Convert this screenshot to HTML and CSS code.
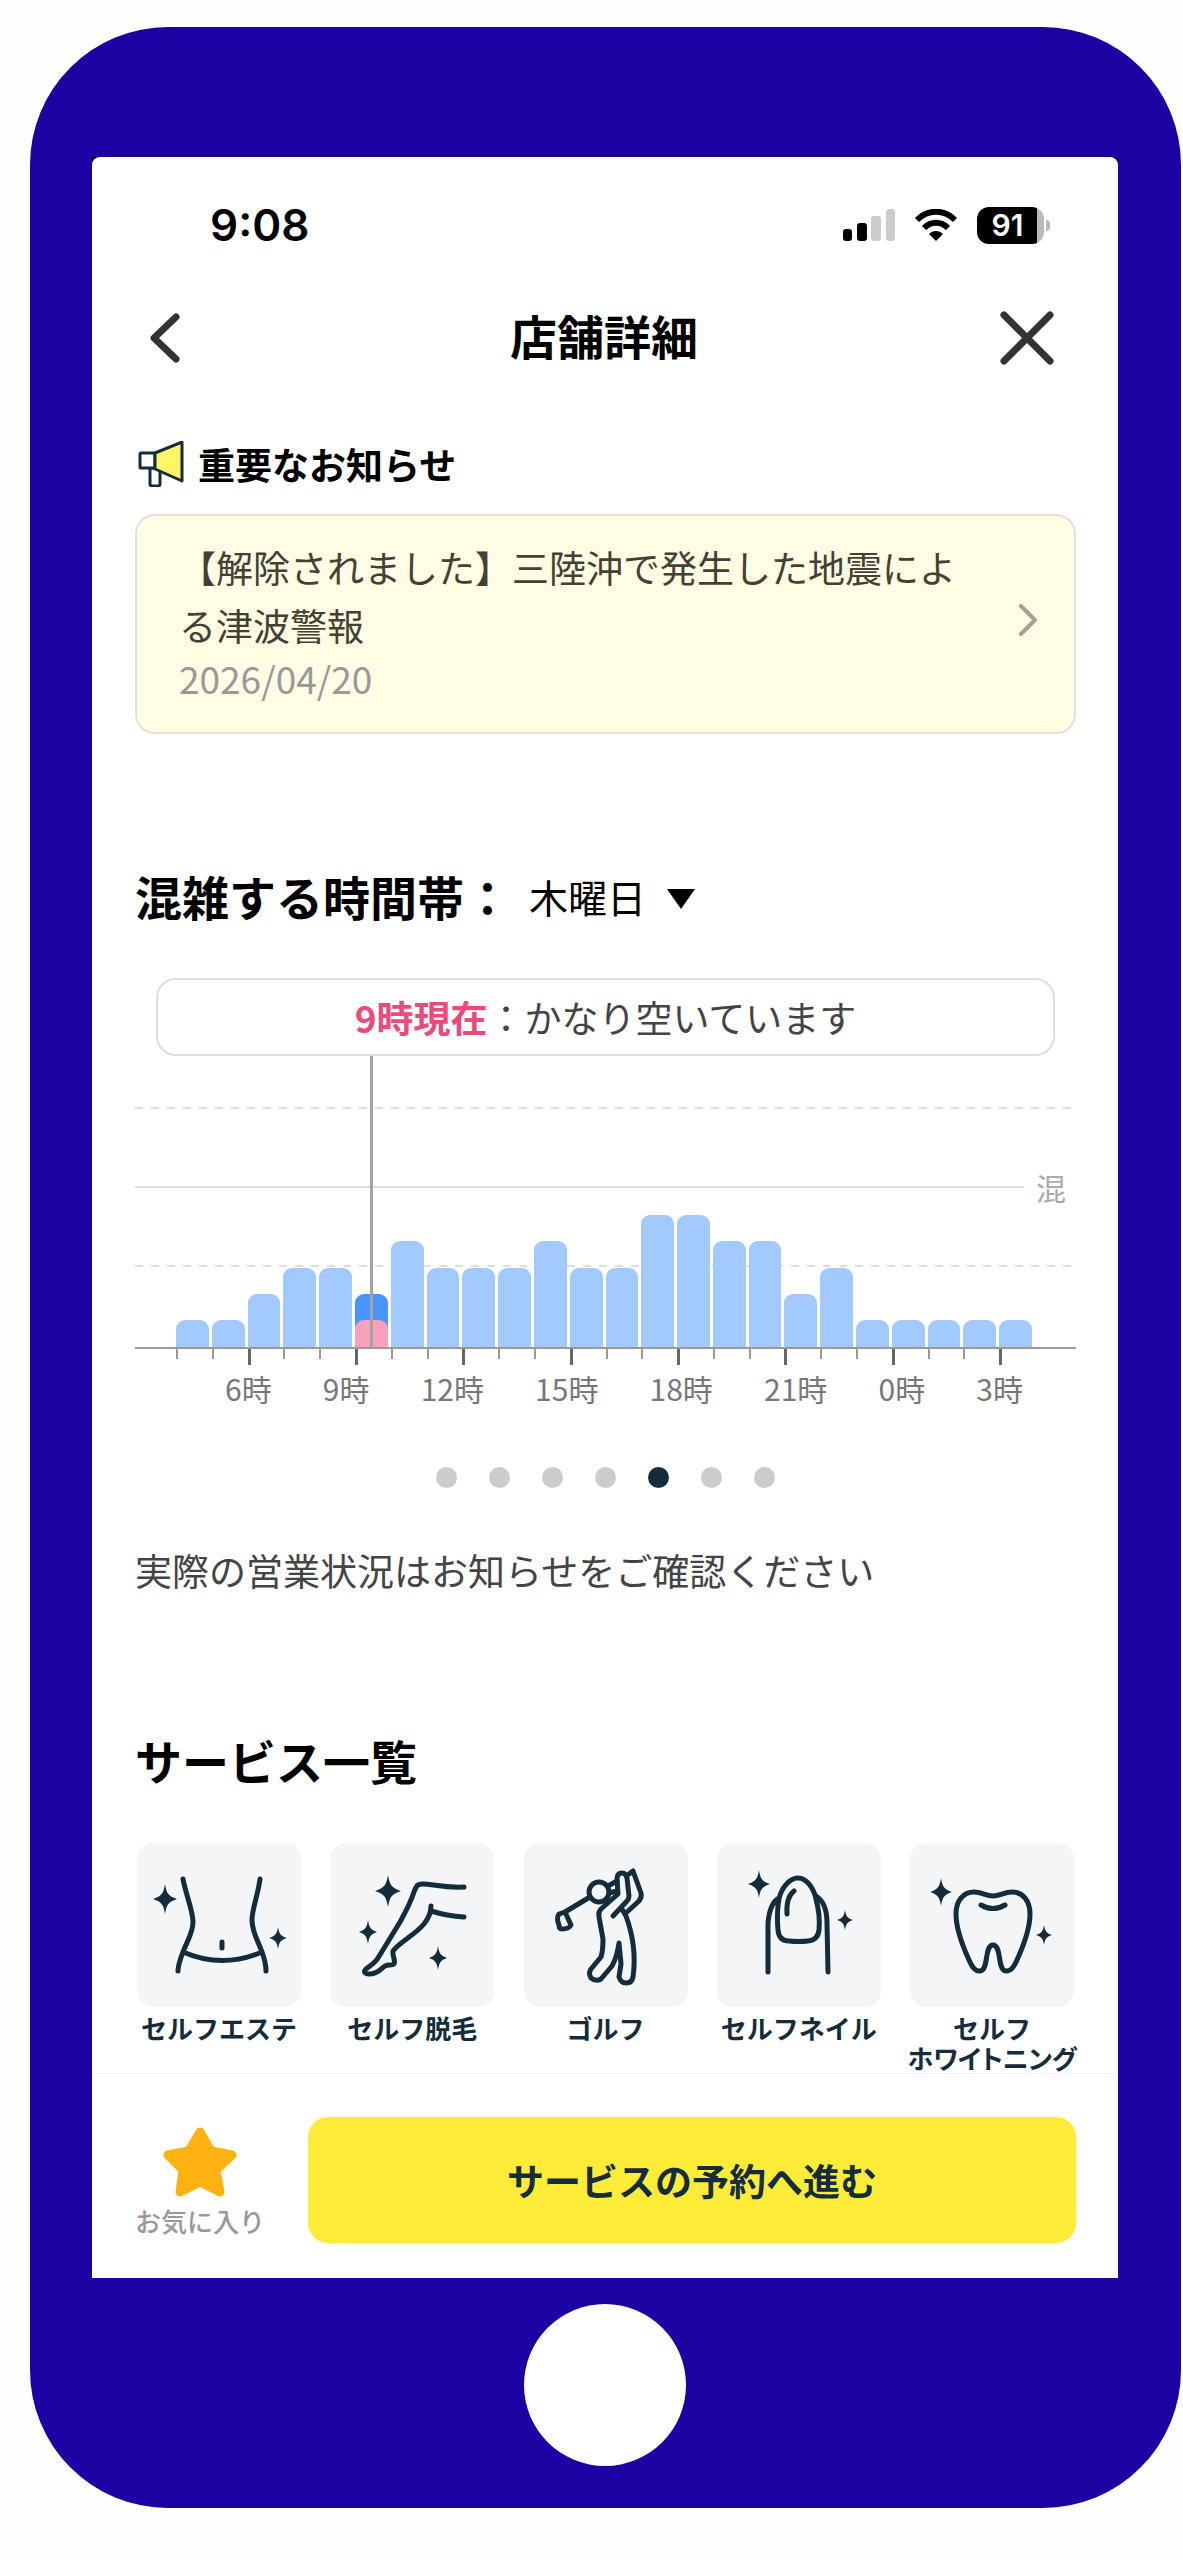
FILE: index.html
```html
<!DOCTYPE html>
<html lang="ja">
<head>
    <meta charset="UTF-8">
    <meta name="viewport" content="width=device-width, initial-scale=1.0">
    <title>店舗詳細</title>
    <link rel="stylesheet" href="styles.css">
</head>
<body>
    <!-- Shared sparkle shape -->
    <svg class="defs" width="0" height="0" aria-hidden="true">
        <symbol id="spark" viewBox="-12 -15 24 30" preserveAspectRatio="none">
            <path d="M0-15C1.500-6 3-3 12 0 3 3 1.500 6 0 15-1.500 6-3 3-12 0-3-3-1.500-6 0-15Z"/>
        </symbol>
    </svg>

    <div class="phone">
        <div class="bezel">
            <div class="screen">
                <!-- Status Bar -->
                <div class="status-bar">
                    <span class="clock">9:08</span>
                    <div class="status-icons">
                        <svg width="52" height="32" viewBox="0 0 52 32" aria-hidden="true">
                            <rect x="0" y="20" width="9" height="12" rx="3"/>
                            <rect x="14" y="14" width="10" height="18" rx="3"/>
                            <rect class="off" x="28" y="7" width="10" height="25" rx="3"/>
                            <rect class="off" x="43" y="0" width="9" height="32" rx="3"/>
                        </svg>
                        <svg class="wifi" width="44" height="32" viewBox="0 0 44 32" aria-hidden="true">
                            <path d="M3 11C14 0 30 0 41 11M10 19C17 12 27 12 34 19"/>
                            <path class="dot" d="M15 25C19 21 25 21 29 25L22 32Z"/>
                        </svg>
                        <div class="battery"><span>91</span></div>
                    </div>
                </div>

                <!-- Title Bar -->
                <header class="nav">
                    <button class="icon-btn" aria-label="戻る">
                        <svg width="30" height="50" viewBox="0 0 30 50"><path d="M26 4L4 25L26 46"/></svg>
                    </button>
                    <h1>店舗詳細</h1>
                    <button class="icon-btn" aria-label="閉じる">
                        <svg width="54" height="54" viewBox="0 0 54 54"><path d="M4 4L50 50M50 4L4 50"/></svg>
                    </button>
                </header>

                <main>
                    <!-- Notice -->
                    <section class="notice">
                        <h2>
                            <svg width="46" height="46" viewBox="0 0 46 46" aria-hidden="true">
                                <path class="handle" d="M12 27H22V43Q22 45 20 45H14Q12 45 12 43Z"/>
                                <path class="box" d="M17 12H3Q2 12 2 13V26Q2 27 3 27H17Z"/>
                                <path class="horn" d="M17 12L44 1V40L17 28Z"/>
                            </svg>
                            重要なお知らせ
                        </h2>
                        <a class="notice-card" href="#">
                            <div>
                                <p>【解除されました】三陸沖で発生した地震による津波警報</p>
                                <time datetime="2026-04-20">2026/04/20</time>
                            </div>
                            <svg width="20" height="32" viewBox="0 0 20 32" aria-hidden="true"><path d="M3 2L17 16L3 30"/></svg>
                        </a>
                    </section>

                    <!-- Busy Hours -->
                    <section class="busy">
                        <div class="busy-head">
                            <h2><label for="day">混雑する時間帯：</label></h2>
                            <div class="day-select">
                                <select id="day">
                                    <option>月曜日</option>
                                    <option>火曜日</option>
                                    <option>水曜日</option>
                                    <option selected>木曜日</option>
                                    <option>金曜日</option>
                                    <option>土曜日</option>
                                    <option>日曜日</option>
                                </select>
                            </div>
                        </div>

                        <p class="callout"><strong>9時現在</strong>：かなり空いています</p>

                        <div class="plot">
                            <div class="line dashed"></div>
                            <div class="line level"><span>混</span></div>
                            <div class="line dashed low"></div>
                            <div class="bars">
                                <i style="height: 27px"></i>
                                <i style="height: 27px"></i>
                                <i style="height: 53px"></i>
                                <i style="height: 79px"></i>
                                <i style="height: 79px"></i>
                                <i class="now" style="height: 53px"><b style="height: 27px"></b></i>
                                <i style="height: 106px"></i>
                                <i style="height: 79px"></i>
                                <i style="height: 79px"></i>
                                <i style="height: 79px"></i>
                                <i style="height: 106px"></i>
                                <i style="height: 79px"></i>
                                <i style="height: 79px"></i>
                                <i style="height: 132px"></i>
                                <i style="height: 132px"></i>
                                <i style="height: 106px"></i>
                                <i style="height: 106px"></i>
                                <i style="height: 53px"></i>
                                <i style="height: 79px"></i>
                                <i style="height: 27px"></i>
                                <i style="height: 27px"></i>
                                <i style="height: 27px"></i>
                                <i style="height: 27px"></i>
                                <i style="height: 27px"></i>
                            </div>
                        </div>
                        <div class="ticks">
                            <i></i><i></i><i></i><i></i><i></i><i></i><i></i><i></i>
                            <i></i><i></i><i></i><i></i><i></i><i></i><i></i><i></i>
                            <i></i><i></i><i></i><i></i><i></i><i></i><i></i><i></i>
                        </div>
                        <div class="hours">
                            <span>6時</span><span>9時</span><span>12時</span><span>15時</span>
                            <span>18時</span><span>21時</span><span>0時</span><span>3時</span>
                        </div>

                        <div class="dots">
                            <button aria-label="日曜日"></button>
                            <button aria-label="月曜日"></button>
                            <button aria-label="火曜日"></button>
                            <button aria-label="水曜日"></button>
                            <button aria-label="木曜日" class="active"></button>
                            <button aria-label="金曜日"></button>
                            <button aria-label="土曜日"></button>
                        </div>

                        <p class="note">実際の営業状況はお知らせをご確認ください</p>
                    </section>

                    <!-- Services -->
                    <section class="services">
                        <h2>サービス一覧</h2>
                        <ul>
                            <li>
                                <svg viewBox="0 0 164 164" aria-hidden="true">
                                    <path d="M46 36C49 52 56 68 56 79C56 90 50 98 46 109C43 117 41 122 41 128M123 36C121 52 115 66 115 77C115 89 121 98 125 109C128 117 129 122 129 128M46 109Q85 126 125 109M85 99V105"/>
                                    <use href="#spark" x="16" y="41" width="24" height="30"/>
                                    <use href="#spark" x="132" y="84" width="18" height="22"/>
                                </svg>
                                <span>セルフエステ</span>
                            </li>
                            <li>
                                <svg viewBox="0 0 164 164" aria-hidden="true">
                                    <path d="M134 44C112 45 104 41 92 41C87 41 86 44 84 49C80 61 76 68 70 79L48 115C45 120 41 122 36 126C33 129 35 131 39 131C49 131 51 125 55 123C58 121 62 123 64 121C66 117 62 113 63 108C68 100 85 92 94 81C98 76 101 71 101 63M101 68Q117 73 134 74"/>
                                    <use href="#spark" x="45" y="32" width="26" height="32"/>
                                    <use href="#spark" x="29" y="77" width="18" height="24"/>
                                    <use href="#spark" x="99" y="103" width="18" height="24"/>
                                </svg>
                                <span>セルフ脱毛</span>
                            </li>
                            <li>
                                <svg viewBox="0 0 164 164" aria-hidden="true">
                                    <circle cx="75" cy="49" r="10"/>
                                    <path d="M66 54L41 69M84 43L93 38M85 50L93 48M35 71L41 69L47 82Q45 86 38 86Q35 86 35 82Q32 75 35 71Z"/>
                                    <path d="M89 73L103 58Q105 56 105 53L103 35Q102 30 98 30Q93 30 93 36L94 51L77 66Q74 69 75 74L79 96C79 102 79 108 77 114L67 126Q64 130 67 135Q72 139 77 136L88 123Q93 114 95 100L97 121L95 134Q97 140 102 140Q108 140 109 134C112 113 110 95 102 73L98 66M105 31L109 28L117 50Q118 54 115 58L103 69"/>
                                </svg>
                                <span>ゴルフ</span>
                            </li>
                            <li>
                                <svg viewBox="0 0 164 164" aria-hidden="true">
                                    <path d="M81 35C72 35 64 46 62 56C60 67 60 76 61 87Q62 98 72 98Q81 99 91 98Q101 97 102 87C103 76 102 67 99 56C97 46 90 35 81 35ZM62 55C55 59 52 68 51 80V129M99 53C107 58 110 68 110 80L111 129M77 48Q69 54 70 71"/>
                                    <use href="#spark" x="31" y="27" width="22" height="28"/>
                                    <use href="#spark" x="120" y="67" width="16" height="20"/>
                                </svg>
                                <span>セルフネイル</span>
                            </li>
                            <li>
                                <svg viewBox="0 0 164 164" aria-hidden="true">
                                    <path d="M83 53C76 53 72 49 64 49C53 49 46 58 46 71C46 85 54 106 59 117Q64 129 70 128C79 128 74 102 83 102C92 102 87 128 96 128Q102 129 107 117C112 106 120 85 120 71C120 58 113 49 102 49C94 49 90 53 83 53ZM71 62Q83 69 95 62"/>
                                    <use href="#spark" x="20" y="35" width="22" height="28"/>
                                    <use href="#spark" x="126" y="82" width="16" height="20"/>
                                </svg>
                                <span>セルフ<br><span class="kana">ホワイトニング</span></span>
                            </li>
                        </ul>
                    </section>
                </main>

                <!-- Bottom Bar -->
                <footer class="bottom-bar">
                    <button class="favorite">
                        <svg width="74" height="70" viewBox="0 0 74 70" aria-hidden="true">
                            <path d="M37 5L48 24L69 28L53 43L57 65L37 55L17 65L20 43L5 28L26 24Z"/>
                        </svg>
                        お気に入り
                    </button>
                    <button class="reserve">サービスの予約へ進む</button>
                </footer>
            </div>
        </div>
        <button class="home" aria-label="ホーム"></button>
    </div>
</body>
</html>
```
FILE: styles.css
```css
:root {
    --frame: #1a02a3;
    --ink: #142c3b;
    --line: #dedede;
    --bar: #a3caff;
}

* {
    margin: 0;
    padding: 0;
    box-sizing: border-box;
}

body {
    background: #fefefe;
    color: #000;
    padding: 27px 2px 50px 30px;
    font-family: "Noto Sans CJK JP", sans-serif;
    font-size: 37px;
    line-height: 58px;
}

button,
select {
    border: none;
    background: none;
    color: inherit;
    font: inherit;
    cursor: pointer;
}

svg {
    display: block;
    flex: none;
}

.defs {
    position: absolute;
}

/* Phone Frame */
.phone {
    background: var(--frame);
    border-radius: 138px;
    padding: 130px 63px 42px 62px;
}

.bezel {
    background: linear-gradient(#000 20px, var(--frame) 20px);
}

.screen {
    background: #fff;
    border-radius: 8px 8px 0 0;
}

.home {
    display: block;
    width: 162px;
    height: 162px;
    margin: 26px auto 0;
    border-radius: 50%;
    background: #fff;
}

/* Status Bar */
.status-bar {
    display: flex;
    align-items: center;
    justify-content: space-between;
    height: 136px;
    padding: 0 68px 0 118px;
}

.clock {
    font: 600 44px/58px Inter, sans-serif;
}

.status-icons {
    display: flex;
    align-items: center;
    gap: 19px;
}

.status-icons .off {
    fill: #ccc;
}

.wifi path {
    fill: none;
    stroke: #000;
    stroke-width: 6;
}

.wifi .dot {
    fill: #000;
    stroke: none;
}

.battery {
    position: relative;
    width: 67px;
    height: 37px;
    margin-right: 6px;
    padding-right: 6px;
    border-radius: 12px;
    background: linear-gradient(90deg, #000 60px, #bbb 60px);
    color: #fff;
    text-align: center;
    font: 600 30px/37px Inter, sans-serif;
}

.battery::after {
    content: "";
    position: absolute;
    left: 69px;
    top: 13px;
    width: 4px;
    height: 11px;
    border-radius: 0 4px 4px 0;
    background: #bbb;
}

/* Title Bar */
.nav {
    display: flex;
    align-items: center;
    justify-content: space-between;
    height: 90px;
    padding: 0 64px 0 58px;
}

.nav h1 {
    padding: 0 0 6px 4px;
    font-size: 47px;
    line-height: 60px;
}

.icon-btn {
    display: flex;
    width: 54px;
}

.icon-btn path {
    fill: none;
    stroke: #333;
    stroke-width: 7;
    stroke-linecap: round;
    stroke-linejoin: round;
}

main {
    padding: 0 42px 0 43px;
}

h2 {
    font-size: 47px;
    line-height: 60px;
}

/* Notice */
.notice h2 {
    display: flex;
    align-items: center;
    gap: 14px;
    margin-top: 51px;
    padding-left: 3px;
    font-size: 37px;
}

.notice h2 path {
    fill: #fff;
    stroke: var(--ink);
    stroke-width: 3;
    stroke-linejoin: round;
}

.notice h2 .horn {
    fill: #fff566;
}

.notice-card {
    display: flex;
    align-items: center;
    justify-content: space-between;
    margin-top: 20px;
    padding: 22px 36px 30px 42px;
    border: 2px solid #e2e0d8;
    border-radius: 20px;
    background: #fffde4;
    color: #444034;
    text-decoration: none;
}

.notice-card div {
    width: 784px;
}

.notice-card time {
    display: block;
    color: #999;
    line-height: 48px;
}

.notice-card path {
    fill: none;
    stroke: #a3a199;
    stroke-width: 4;
    stroke-linecap: round;
    stroke-linejoin: round;
}

/* Busy Hours */
.busy-head {
    display: flex;
    align-items: center;
    gap: 18px;
    margin-top: 132px;
}

.day-select {
    position: relative;
}

.day-select select {
    display: block;
    appearance: none;
    padding-right: 48px;
    font-size: 39px;
    line-height: 60px;
}

.day-select::after {
    content: "";
    position: absolute;
    right: 0;
    top: 23px;
    border: 14px solid transparent;
    border-top: 20px solid #000;
    border-bottom: 0;
    pointer-events: none;
}

.callout {
    margin: 52px 21px 0;
    padding: 8px 0;
    border: 2px solid var(--line);
    border-radius: 20px;
    color: #444;
    text-align: center;
}

.callout strong {
    color: #e84b7c;
}

.plot {
    position: relative;
    height: 293px;
    border-bottom: 2px solid #999;
}

.line {
    position: absolute;
    left: 0;
    right: 0;
    top: 51px;
    height: 2px;
}

.dashed {
    background: repeating-linear-gradient(90deg, #ddd 0 8px, transparent 8px 16px);
}

.low {
    top: 209px;
}

.level {
    top: 130px;
    right: 52px;
    background: var(--line);
}

.level span {
    position: absolute;
    left: 100%;
    top: -19px;
    margin-left: 12px;
    color: #aaa;
    font-size: 30px;
    line-height: 40px;
}

.bars,
.ticks {
    display: grid;
    grid-template-columns: repeat(24, 1fr);
    margin: 0 41px 0 41px;
}

.bars {
    position: relative;
    align-items: end;
    column-gap: 3px;
    height: 291px;
    margin-right: 44px;
}

.bars i {
    border-radius: 9px 9px 0 0;
    background: var(--bar);
}

.bars .now {
    position: relative;
    display: flex;
    align-items: end;
    background: #4896fd;
}

.bars .now b {
    flex: 1;
    border-radius: 9px 9px 0 0;
    background: #f7a1bd;
}

/* Marker from the callout down to the current hour */
.bars .now::after {
    content: "";
    position: absolute;
    left: 50%;
    bottom: 0;
    width: 3px;
    height: 291px;
    margin-left: -1px;
    background: #a3a3a3;
}

.ticks {
    height: 16px;
}

.ticks i {
    width: 2px;
    height: 10px;
    background: #999;
}

.ticks i:nth-child(3n) {
    width: 3px;
    height: 16px;
    background: #666;
}

.hours {
    display: flex;
    justify-content: space-between;
    padding: 3px 53px 0 90px;
    color: #777;
    font-size: 30px;
    line-height: 40px;
}

.dots {
    display: flex;
    justify-content: center;
    gap: 32px;
    margin-top: 59px;
}

.dots button {
    width: 21px;
    height: 21px;
    border-radius: 50%;
    background: #ccc;
}

.dots .active {
    background: var(--ink);
}

.note {
    margin-top: 53px;
    color: #444;
}

/* Services */
.services h2 {
    margin-top: 131px;
}

.services ul {
    display: flex;
    justify-content: space-between;
    margin-top: 53px;
    padding: 0 2px;
    list-style: none;
}

.services li {
    display: flex;
    flex-direction: column;
    align-items: center;
    gap: 6px;
    width: 164px;
    color: var(--ink);
    font-size: 26px;
    font-weight: bold;
    line-height: 30px;
    text-align: center;
    white-space: nowrap;
}

.services .kana {
    font-feature-settings: "palt";
}

.services svg {
    width: 100%;
    border-radius: 16px;
    background: #f3f5f7;
    fill: none;
    stroke: var(--ink);
    stroke-width: 5;
    stroke-linecap: round;
    stroke-linejoin: round;
}

.services use {
    fill: var(--ink);
    stroke: none;
}

/* Bottom Bar */
.bottom-bar {
    display: flex;
    align-items: center;
    gap: 43px;
    border-top: 1px solid #f3f3f3;
    padding: 43px 42px 35px 43px;
}

.favorite {
    display: flex;
    flex-direction: column;
    align-items: center;
    gap: 4px;
    padding-top: 8px;
    color: #999;
    font-size: 26px;
    font-weight: 500;
    line-height: 40px;
}

.favorite path {
    fill: #ffb211;
    stroke: #ffb211;
    stroke-width: 9;
    stroke-linejoin: round;
}

.reserve {
    flex: 1;
    height: 126px;
    border-radius: 20px;
    background: #ffec38;
    color: var(--ink);
    font-weight: bold;
}
```
